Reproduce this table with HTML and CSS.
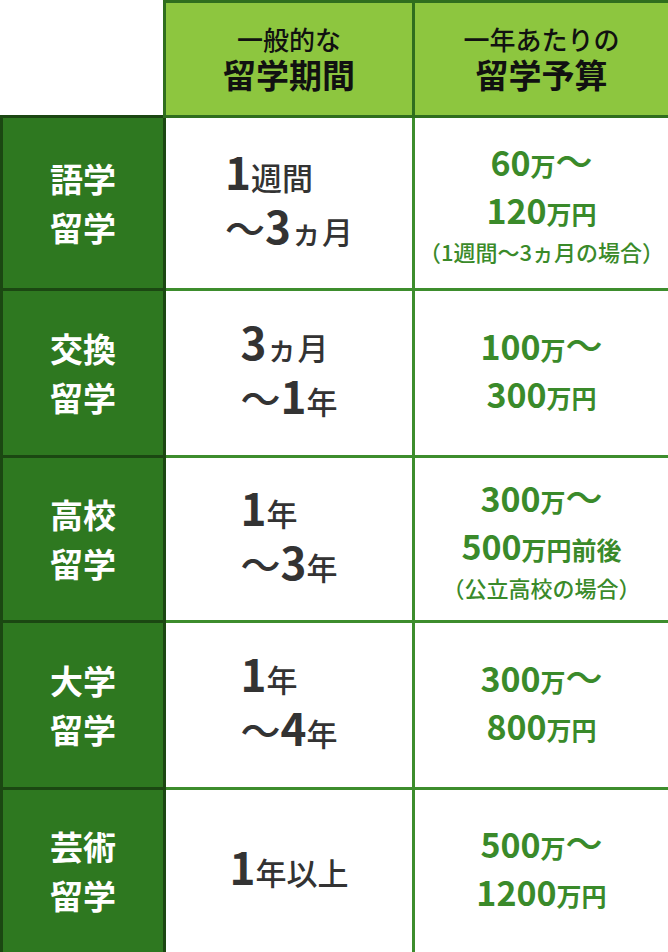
FILE: index.html
```html
<!DOCTYPE html>
<html lang="ja">
<head>
<meta charset="utf-8">
<link rel="stylesheet" href="styles.css">
</head>
<body>
<table class="study">
  <colgroup><col class="c1"><col class="c2"><col class="c3"></colgroup>
  <tr class="head">
    <td class="corner"></td>
    <th class="hd"><span class="hs">一般的な</span><span class="hb">留学期間</span></th>
    <th class="hd"><span class="hs">一年あたりの</span><span class="hb">留学予算</span></th>
  </tr>
  <tr class="r1">
    <th class="type">語学<br>留学</th>
    <td class="period"><div class="pb"><span class="n">1</span>週間<br><span class="w">〜</span><span class="n">3</span>ヵ月</div></td>
    <td class="cost"><span class="n">60</span>万<span class="w">〜</span><br><span class="n">120</span>万円<span class="note">（1週間〜3ヵ月の場合）</span></td>
  </tr>
  <tr class="r2">
    <th class="type">交換<br>留学</th>
    <td class="period"><div class="pb"><span class="n">3</span>ヵ月<br><span class="w">〜</span><span class="n">1</span>年</div></td>
    <td class="cost"><span class="n">100</span>万<span class="w">〜</span><br><span class="n">300</span>万円</td>
  </tr>
  <tr class="r3">
    <th class="type">高校<br>留学</th>
    <td class="period"><div class="pb"><span class="n">1</span>年<br><span class="w">〜</span><span class="n">3</span>年</div></td>
    <td class="cost"><span class="n">300</span>万<span class="w">〜</span><br><span class="n">500</span>万円前後<span class="note">（公立高校の場合）</span></td>
  </tr>
  <tr class="r4">
    <th class="type">大学<br>留学</th>
    <td class="period"><div class="pb"><span class="n">1</span>年<br><span class="w">〜</span><span class="n">4</span>年</div></td>
    <td class="cost"><span class="n">300</span>万<span class="w">〜</span><br><span class="n">800</span>万円</td>
  </tr>
  <tr class="r5">
    <th class="type">芸術<br>留学</th>
    <td class="period"><div class="pb"><span class="n">1</span>年以上</div></td>
    <td class="cost"><span class="n">500</span>万<span class="w">〜</span><br><span class="n">1200</span>万円</td>
  </tr>
</table>
</body>
</html>
```

FILE: styles.css
```css
html, body {
  margin: 0;
  padding: 0;
  background: #ffffff;
}
body {
  font-family: "Noto Sans CJK JP", "Noto Sans", sans-serif;
}
.study {
  width: 668px;
  border-collapse: collapse;
  table-layout: fixed;
}
.c1 { width: 163px; }
.c2 { width: 249px; }
.c3 { width: 256px; }
.head { height: 115px; }
.r1 { height: 173px; }
.r2 { height: 167px; }
.r3 { height: 165px; }
.r4 { height: 167px; }
.r5 { height: 165px; }
.corner {
  border: none;
  background: #ffffff;
}
.hd {
  background: #8dc63f;
  border: 3px solid #2f6e1e;
  color: #111;
  text-align: center;
  vertical-align: middle;
  padding: 0;
}
.hs {
  display: block;
  font-size: 26px;
  font-weight: 500;
  line-height: 30px;
}
.hb {
  display: block;
  font-size: 33px;
  font-weight: 700;
  line-height: 40px;
}
.type {
  background: #2e7820;
  border: 3px solid #1b4712;
  color: #ffffff;
  font-size: 33px;
  font-weight: 700;
  line-height: 49px;
  text-align: center;
  padding: 0;
}
.period, .cost {
  border: 3px solid #3d8d2d;
  padding: 0;
  vertical-align: middle;
  text-align: center;
}
.pb {
  display: inline-block;
  text-align: left;
  color: #333333;
  font-size: 31px;
  font-weight: 500;
  line-height: 52px;
}
.pb .n {
  font-size: 44px;
  font-weight: 700;
  line-height: 1;
}
.pb .w {
  font-size: 40px;
  font-weight: 500;
  line-height: 1;
}
.cost {
  color: #3a8a2a;
  font-size: 25px;
  font-weight: 700;
  line-height: 48px;
}
.cost .n {
  font-size: 34px;
  line-height: 1;
}
.cost .w {
  font-size: 37px;
  font-weight: 500;
  line-height: 1;
}
.note {
  display: block;
  font-size: 22px;
  font-weight: 500;
  line-height: 28px;
  white-space: nowrap;
}
```
